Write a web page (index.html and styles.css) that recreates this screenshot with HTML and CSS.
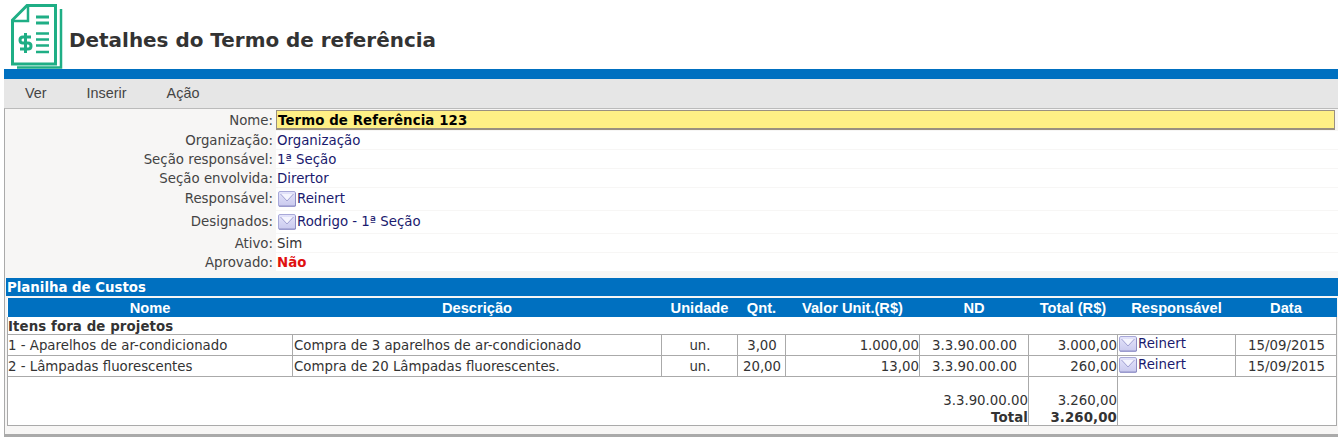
FILE: index.html
```html
<!DOCTYPE html>
<html lang="pt">
<head>
<meta charset="utf-8">
<title>Detalhes do Termo de referência</title>
<link rel="stylesheet" href="styles.css">
</head>
<body>
<svg width="0" height="0" class="defs"><defs>
<linearGradient id="mg" x1="0" y1="0" x2="0" y2="1"><stop offset="0" stop-color="#e4e4fa"/><stop offset="1" stop-color="#c9c9ee"/></linearGradient>
<symbol id="mail" viewBox="0 0 18 16">
<rect x="0.500" y="0.500" width="17" height="15" rx="1.500" fill="url(#mg)" stroke="#a8a8d8"/>
<path d="M3 3h12L9 9.500z" fill="#f4f4fe"/>
<path d="M2.500 3l6.500 7 6.500-7" fill="none" stroke="#a4a4d4"/>
<path d="M1 15h16.500V2" fill="none" stroke="#8e8ec4"/>
</symbol>
</defs></svg>
<header class="head">
<svg class="logo" width="64" height="69" viewBox="0 0 64 69" fill="none" stroke="#1fae85">
<path d="M27 5.500H55.500V64H12.500V20z" stroke-width="3"/>
<path d="M28 5V21H12" stroke-width="2.500"/>
<path d="M61 9V67.500H17" stroke-width="2.500"/>
<path d="M36 17H49M36 23H49" stroke-width="3"/>
<path d="M36 33.500H49M36 39.500H49M36 45.500H49M36 52H49" stroke-width="2.500"/>
<path d="M31 37H23Q20 37 20 40T23 43H28Q31 43 31 46T28 49H20M25.500 33V53" stroke-width="3"/>
</svg>
<h1 class="title">Detalhes do Termo de referência</h1>
</header>
<div class="band"></div>
<nav class="menu"><a>Ver</a><a>Inserir</a><a>Ação</a></nav>
<main class="panel">
<dl class="form">
<div class="row r-name"><dt>Nome:</dt><dd class="yellow">Termo de Referência 123</dd></div>
<div class="row"><dt>Organização:</dt><dd class="link">Organização</dd></div>
<div class="row"><dt>Seção responsável:</dt><dd class="link">1ª Seção</dd></div>
<div class="row"><dt>Seção envolvida:</dt><dd class="link">Dirertor</dd></div>
<div class="row r-tall"><dt>Responsável:</dt><dd class="link"><svg class="mail"><use href="#mail"/></svg>Reinert</dd></div>
<div class="row r-tall"><dt>Designados:</dt><dd class="link"><svg class="mail"><use href="#mail"/></svg>Rodrigo - 1ª Seção</dd></div>
<div class="row"><dt>Ativo:</dt><dd>Sim</dd></div>
<div class="row"><dt>Aprovado:</dt><dd class="no">Não</dd></div>
</dl>
<h2 class="section">Planilha de Custos</h2>
<table class="costs">
<colgroup><col class="c1"><col class="c2"><col class="c3"><col class="c4"><col class="c5"><col class="c6"><col class="c7"><col class="c8"><col class="c9"></colgroup>
<thead><tr><th>Nome</th><th>Descrição</th><th>Unidade</th><th>Qnt.</th><th>Valor Unit.(R$)</th><th>ND</th><th>Total (R$)</th><th>Responsável</th><th>Data</th></tr></thead>
<tbody>
<tr class="group"><td colspan="9">Itens fora de projetos</td></tr>
<tr class="item"><td>1 - Aparelhos de ar-condicionado</td><td>Compra de 3 aparelhos de ar-condicionado</td><td class="ctr">un.</td><td class="ctr">3,00</td><td class="num">1.000,00</td><td class="ctr">3.3.90.00.00</td><td class="num">3.000,00</td><td class="link resp"><svg class="mail"><use href="#mail"/></svg>Reinert</td><td class="ctr">15/09/2015</td></tr>
<tr class="item"><td>2 - Lâmpadas fluorescentes</td><td>Compra de 20 Lâmpadas fluorescentes.</td><td class="ctr">un.</td><td class="ctr">20,00</td><td class="num">13,00</td><td class="ctr">3.3.90.00.00</td><td class="num">260,00</td><td class="link resp"><svg class="mail"><use href="#mail"/></svg>Reinert</td><td class="ctr">15/09/2015</td></tr>
<tr class="sum"><td colspan="6"><div class="plain">3.3.90.00.00</div><div class="bold">Total</div></td><td><div class="plain">3.260,00</div><div class="bold">3.260,00</div></td><td colspan="2"></td></tr>
</tbody>
</table>
</main>
</body>
</html>
```
FILE: styles.css
```css
html, body { margin: 0; padding: 0; background: #fff; }
body { height: 438px; overflow: hidden; font: 13.33px/18px "DejaVu Sans", sans-serif; color: #333; }
.defs { position: absolute; }
.head { height: 69px; display: flex; align-items: flex-start; }
.logo { flex: none; }
.title { margin: 27px 0 0 5px; font: bold 19.950px/26px "DejaVu Sans", sans-serif; color: #333; }
.band { height: 10px; margin-left: 4px; background: #0070c0; }
.menu { height: 29px; margin-left: 4px; background: #e6e6e6; display: flex; font: 14.400px/29px "Liberation Sans", sans-serif; color: #444; }
.menu a { margin-left: 21px; margin-right: 19px; }
.panel { margin-left: 4px; height: 329px; border-left: 1px solid #aaa; border-top: 1px solid #bbb; border-bottom: 3px solid #aaa; background: #f7f6f5; box-sizing: border-box; }
.form { margin: 0; padding-top: 1px; height: 168px; }
.row { display: grid; grid-template-columns: 268px 1fr; column-gap: 3px; height: 19px; }
dt { text-align: right; color: #444; height: 18px; line-height: 20px; }
dd { margin: 0; height: 18px; line-height: 20px; background: #fff; padding-left: 1px; }
.r-name { height: 21px; }
.r-name dt { line-height: 22px; }
.r-tall { height: 23px; }
.r-tall dt, .r-tall dd { height: 22px; line-height: 22px; }
dd.yellow { height: 20px; margin-right: 3px; box-sizing: border-box; background: #fff085; border: 1px solid #9a9080; border-width: 1px 1px 2px; font-weight: bold; letter-spacing: .1px; color: #000; line-height: 20px; }
.link { color: #1a1a6e; }
.no { color: #e01010; font-weight: bold; }
.mail { width: 18px; height: 16px; vertical-align: -4px; margin: 0 1px; }
.section { margin: 0 0 2px 1px; height: 17px; padding: 1px 0 0 1px; background: #0070c0; color: #fff; font: bold 13.33px/18px "DejaVu Sans", sans-serif; }
.costs { margin-left: 2px; width: 1329px; table-layout: fixed; border-collapse: collapse; background: #fff; }
.c1 { width: 285px; } .c2 { width: 369px; } .c3 { width: 76px; } .c4 { width: 48px; } .c5 { width: 134px; } .c6 { width: 109px; } .c7 { width: 89px; } .c8 { width: 118px; } .c9 { width: 101px; }
.costs th { height: 17px; padding: 2px 0 0; background: #0070c0; color: #fff; font: bold 14.67px/17px "Liberation Sans", sans-serif; text-align: center; }
.costs td { padding: 0 0 0 1px; border: 1px solid #aaa; white-space: nowrap; overflow: hidden; }
.costs td:first-child { padding-left: 0; }
.costs .group td { padding-top: 2px; height: 15px; font-weight: bold; letter-spacing: .1px; color: #333; border-width: 0 1px 1px; line-height: 15px; }
.item td { height: 20px; line-height: 19px; }
.ctr { text-align: center; }
.num { text-align: right; }
.costs td.resp { padding: 0; line-height: 17px; vertical-align: top; }
.sum td { height: 48px; vertical-align: bottom; text-align: right; }
.plain { line-height: 17px; margin-bottom: 1px; }
.bold { font-weight: bold; line-height: 15px; letter-spacing: .1px; }
```
